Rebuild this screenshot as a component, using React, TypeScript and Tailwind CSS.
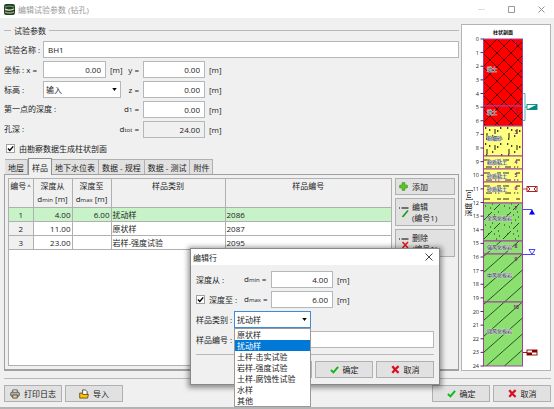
import React, {useState} from "react";

const samples = [
    {id: 1, from: '4.00', to: '6.00', type: '扰动样', no: '2086'},
    {id: 2, from: '11.00', to: '', type: '原状样', no: '2087'},
    {id: 3, from: '23.00', to: '', type: '岩样-强度试验', no: '2095'},
];

const tabs = ['地层', '样品', '地下水位表', '数据 - 规程', '数据 - 测试', '附件'];

const sampleTypes = ['原状样', '扰动样', '土样-击实试验', '岩样-强度试验', '土样-腐蚀性试验', '水样', '其他'];

// y coordinates are in the drawing's own space, 0 m is at y=14, 24 m at y=341
const layers = [
    {n: '1', top: 14, bottom: 81, fill: 'red', name: '填土', ly: 44, ny: 20},
    {n: '2', top: 81, bottom: 101, fill: 'red', name: '填土', ly: 87, ny: 87},
    {n: '3', top: 101, bottom: 131, fill: 'sand', name: '粉细砂', ly: 113, ny: 108},
    {n: '4', top: 131, bottom: 144, fill: 'clay', name: '粉质粘土', ly: 137, ny: 138},
    {n: '5', top: 144, bottom: 157, fill: 'clay', name: '砂质粘土', ly: 151, ny: 151},
    {n: '6', top: 157, bottom: 178, fill: 'clay', name: '砂质粘土', ly: 164, ny: 164},
    {n: '7', top: 178, bottom: 216, fill: 'dots', name: '全风化板岩', ly: 193, ny: 184},
    {n: '8', top: 216, bottom: 229, fill: 'rock', name: '强风化板岩', ly: 222, ny: 222},
    {n: '9', top: 229, bottom: 277, fill: 'rock', name: '中风化板岩', ly: 250, ny: 235},
    {n: '10', top: 277, bottom: 341, fill: 'rock', name: '微风化板岩', ly: 306, ny: 283},
];

const depths = Array.from({length: 25}, (_, i) => i);

const inputClass = "h-[17px] border border-[#b4b8b8] bg-white px-1 outline-none";
const buttonClass = "flex h-[17px] w-[58px] items-center justify-center gap-1 border border-[#b0b0b0] bg-[#e1e1e1]";

function CheckIcon() {
    return (
        <svg viewBox="0 0 10 10" className="h-[9px] w-[9px]">
            <path d="M1 5.500 3.800 8.200 9 2" fill="none" stroke="#12b812" strokeWidth="2.100"/>
        </svg>
    );
}

function CrossIcon() {
    return (
        <svg viewBox="0 0 10 10" className="h-[9px] w-[9px]">
            <path d="M1.500 1.300Q4 5.500 8.500 8.700M8.500 1.300Q4.500 4.500 1.500 8.700" fill="none" stroke="#d80f20"
                  strokeWidth="2.500"/>
        </svg>
    );
}

function Arrow() {
    return (
        <svg viewBox="0 0 6 4" className="pointer-events-none absolute right-1 top-[7px] h-[3px] w-[5px]">
            <path d="M0 0H6L3 4Z" fill="#000"/>
        </svg>
    );
}

function CheckBox({id}: {id: string}) {
    return (
        <span className="relative flex h-[9px] w-[9px]">
            <input id={id} type="checkbox" defaultChecked
                   className="peer h-[9px] w-[9px] appearance-none border border-[#a0a0a0] bg-white"/>
            <svg viewBox="0 0 9 9" className="pointer-events-none absolute inset-0 hidden peer-checked:block">
                <path d="M2 4.600 3.800 6.400 7.200 2.400" fill="none" stroke="#000" strokeWidth="1.400"/>
            </svg>
        </span>
    );
}

function Sub({children}: {children: string}) {
    return <span className="text-[6px]">{children}</span>;
}

function Profile() {
    return (
        <svg viewBox="0 0 88 345" className="h-[345px] w-[88px]" fontFamily="'Open Sans','Noto Sans CJK SC',sans-serif">
            <defs>
                <pattern id="red" x="21" y="14" width="14" height="14" patternUnits="userSpaceOnUse">
                    <rect width="14" height="14" fill="#ff0000"/>
                    <path d="M-1 -1 15 15M15 -1 -1 15" stroke="#400" strokeWidth="0.800"/>
                </pattern>
                <pattern id="sand" x="21" y="101" width="22" height="16" patternUnits="userSpaceOnUse">
                    <rect width="22" height="16" fill="#ffff80"/>
                    <path d="M2 2h1.300M6 4h1.300M17 2h1.400M9 10h1.300M14 5h1.400M3 13h1.300M18 13h1.300" stroke="#000"
                          strokeWidth="1.300"/>
                    <path d="M12 3v5M4 7v5" stroke="#000" strokeWidth="0.900"/>
                </pattern>
                <pattern id="clay" x="21" y="131" width="19" height="13" patternUnits="userSpaceOnUse">
                    <rect width="19" height="13" fill="#ffff80"/>
                    <path d="M1 4h6M14 4h4M3 11h6M12 11h1.300M15 11h1.300" stroke="#111" strokeWidth="0.900"/>
                </pattern>
                <pattern id="rock" x="21" y="216" width="18" height="16" patternUnits="userSpaceOnUse">
                    <rect width="18" height="16" fill="#8be070"/>
                    <path d="M-9 24 27 -8M-9 8 9 -8M9 24 27 8" stroke="#122a12" strokeWidth="0.800"/>
                </pattern>
                <pattern id="dots" x="21" y="178" width="19" height="19" patternUnits="userSpaceOnUse">
                    <rect width="19" height="19" fill="#8be070"/>
                    <path d="M1 17 9 9M11 7 17 1" stroke="#122a12" strokeWidth="0.800"/>
                    <path d="M2 3h1M7 5h1M11 12h1M15 9h1M13 17h1M5 12h1M9 1h1M16 14h1" stroke="#122a12"/>
                </pattern>
            </defs>
            <text x="41" y="9" fontSize="5" fontWeight="700" textAnchor="middle">柱状剖面</text>
            {layers.map((l) => (
                <g key={l.n}>
                    <rect x="21.500" y={l.top} width="39" height={l.bottom - l.top} fill={`url(#${l.fill})`}
                          stroke="#a040a0" strokeWidth="1"/>
                    <text x="25" y={l.ly + 2} fontSize="5" fill="#234" stroke="#ddd" strokeWidth="0.700"
                          paintOrder="stroke">{l.name}</text>
                    <text x="54" y={l.ny + 1} fontSize="5" fontWeight="700" fill="#8a2080"
                          textAnchor="middle">{l.n}</text>
                </g>
            ))}
            {depths.map((d) => (
                <g key={d}>
                    <path d={`M18.500 ${14 + d * 13.625}h3`} stroke="#222" strokeWidth="0.900"/>
                    <text x="17" y={16 + d * 13.625} fontSize="5.500" textAnchor="end" fill="#222">{d}</text>
                </g>
            ))}
            <text x="9" y="178" fontSize="7" textAnchor="middle" transform="rotate(-90 9 178)">深度 [m]</text>
            <path d="M61 68.500h2v27H61M63 82h2" fill="none" stroke="#4aa" strokeWidth="0.900"/>
            <rect x="65" y="79.500" width="10" height="5" fill="#fff" stroke="#088" strokeWidth="0.900"/>
            <path d="M65 84.500 75 79.500V84.500Z" fill="#088"/>
            <path d="M61 164h4" stroke="#a33" strokeWidth="0.900"/>
            <rect x="65" y="161.500" width="10" height="5" fill="#fff" stroke="#a22" strokeWidth="1"/>
            <path d="M66 162 68 164 66 166M74 162 72 164 74 166" fill="none" stroke="#a22"/>
            <path d="M61 184.500h9v5M61 229.500h12" fill="none" stroke="#33f" strokeWidth="0.900"/>
            <path d="M67 189.500 70 184.500 73 189.500Z" fill="#00f"/>
            <path d="M67 224.500h6l-3 5Z" fill="#fff" stroke="#33f" strokeWidth="0.900"/>
            <path d="M61 327.500h4" stroke="#800" strokeWidth="0.900"/>
            <rect x="65" y="325" width="10" height="5" fill="#fff" stroke="#800" strokeWidth="0.900"/>
            <path d="M70 325h5v2.500h-5ZM65 327.500h5v2.500h-5Z" fill="#800"/>
        </svg>
    );
}

function EditDialog() {
    const [type, setType] = useState('扰动样');

    return (
        <div role="dialog" aria-label="编辑行"
             className="absolute left-[190px] top-[248px] w-[250px] border border-[#888] bg-[#f0f0f0] shadow-[0_1px_5px_2px_rgba(0,0,0,0.4)]">
            <header className="flex h-4 items-center justify-between bg-white pl-[2px] pr-1.5">
                <h2>编辑行</h2>
                <button aria-label="关闭">
                    <svg viewBox="0 0 8 8" className="h-2 w-2">
                        <path d="M0.500 0.500 7.500 7.500M7.500 0.500 0.500 7.500" stroke="#333" strokeWidth="0.900"/>
                    </svg>
                </button>
            </header>
            <div className="flex flex-col gap-[3px] px-[5px] pb-1.5 pt-1.5">
                <div className="flex items-center">
                    <span className="w-12">深度从 :</span>
                    <label htmlFor="dmin" className="w-[27px]">d<Sub>min</Sub> =</label>
                    <input id="dmin" defaultValue="4.00" className={`${inputClass} w-[62px] text-right`}/>
                    <span className="pl-1">[m]</span>
                </div>
                <div className="flex items-center">
                    <span className="flex w-12 items-center gap-1">
                        <CheckBox id="useTo"/>
                        <label htmlFor="useTo" className="whitespace-nowrap">深度至 :</label>
                    </span>
                    <label htmlFor="dmax" className="w-[27px]">d<Sub>max</Sub> =</label>
                    <input id="dmax" defaultValue="6.00" className={`${inputClass} w-[62px] text-right`}/>
                    <span className="pl-1">[m]</span>
                </div>
                <div className="flex items-center">
                    <label htmlFor="type" className="w-[38px]">样品类别 :</label>
                    <div className="relative">
                        <select id="type" value={type} onChange={(e) => setType(e.target.value)}
                                className="block h-[17px] w-[77px] appearance-none border border-[#3c8dd9] bg-white px-[2px] outline-none">
                            {sampleTypes.map((s) => <option key={s}>{s}</option>)}
                        </select>
                        <Arrow/>
                        <ul role="listbox" aria-label="样品类别"
                            className="absolute left-0 top-[17px] z-10 w-[77px] border border-[#999] bg-white">
                            {sampleTypes.map((s) => (
                                <li key={s} role="option" aria-selected={s === type} onClick={() => setType(s)}
                                    className={`h-[11px] px-[2px] leading-[11px] ${s === type ? "bg-[#0078d7] text-white" : ""}`}>
                                    {s}
                                </li>
                            ))}
                        </ul>
                    </div>
                </div>
                <div className="flex items-center">
                    <label htmlFor="no" className="w-[38px]">样品编号 :</label>
                    <input id="no" defaultValue="2086" className={`${inputClass} min-w-0 flex-1`}/>
                </div>
                <div className="mt-[3px] flex justify-end gap-[3px] border-t border-[#b8b8b8] pt-1.5">
                    <button className={buttonClass} aria-label="上一个"/>
                    <button className={buttonClass}><CheckIcon/>确定</button>
                    <button className={buttonClass}><CrossIcon/>取消</button>
                </div>
            </div>
        </div>
    );
}

export default function App() {
    const [tab, setTab] = useState('样品');

    return (
        <div
            className="relative flex min-h-screen flex-col border-b-2 border-[#b4b4b4] bg-[#f0f0f0] font-['Open_Sans','Noto_Sans_CJK_SC',sans-serif] text-[8px] leading-[11px] text-[#222]">
            <header className="flex h-[18px] items-center bg-white pl-1 pr-[9px] text-[#999]">
                <svg viewBox="0 0 12 12" className="mr-[3px] h-[11px] w-[11px]">
                    <rect width="12" height="12" rx="2.500" fill="#253a25"/>
                    <path d="M1 2.500Q6 .5 11 2.500V4Q6 2 1 4Z" fill="#5c9a54"/>
                    <path d="M1 5Q6 7 11 4.500V6Q6 8.500 1 6.500Z" fill="#e0e4c8"/>
                    <path d="M1 8Q6 10 11 8V9.500Q6 11.500 1 9.500Z" fill="#8da878"/>
                </svg>
                <h1 className="flex-1">编辑试验参数 (钻孔)</h1>
                <div className="flex items-center gap-[23px]">
                    <button aria-label="最小化">
                        <svg viewBox="0 0 7 7" className="h-[7px] w-[7px]"><path d="M0 3.500h7" stroke="#ddd"/></svg>
                    </button>
                    <button aria-label="最大化">
                        <svg viewBox="0 0 7 7" className="h-[7px] w-[7px]">
                            <path d="M.5 .5h6v6h-6Z" fill="none" stroke="#999"/>
                        </svg>
                    </button>
                    <button aria-label="关闭">
                        <svg viewBox="0 0 7 7" className="h-[7px] w-[7px]">
                            <path d="M.5 .5 6.500 6.500M6.500 .5 .5 6.500" stroke="#888" strokeWidth="0.900"/>
                        </svg>
                    </button>
                </div>
            </header>

            <main className="flex flex-1 gap-[2px] pl-1 pr-[3px] pt-1.5">
                <div className="flex min-w-0 flex-1 flex-col">
                    <div className="mb-[5px] flex h-3 items-center gap-[3px]">
                        <span className="w-[7px] border-t border-[#b8b8b8]"/>
                        <h2>试验参数</h2>
                        <span className="flex-1 border-t border-[#b8b8b8]"/>
                    </div>
                    <div className="flex flex-col gap-[3px]">
                        <div className="flex items-center">
                            <label htmlFor="name" className="w-[39px]">试验名称 :</label>
                            <input id="name" defaultValue="BH1" className={`${inputClass} min-w-0 flex-1`}/>
                        </div>
                        <div className="flex items-center">
                            <label htmlFor="x" className="w-[39px]">坐标 : x =</label>
                            <input id="x" defaultValue="0.00" className={`${inputClass} w-[63px] text-right`}/>
                            <span className="w-5 pl-1">[m]</span>
                            <label htmlFor="y" className="w-[17px] pr-1 text-right">y =</label>
                            <input id="y" defaultValue="0.00" className={`${inputClass} w-[62px] text-right`}/>
                            <span className="pl-1">[m]</span>
                        </div>
                        <div className="flex items-center">
                            <label htmlFor="elevation" className="w-[39px]">标高 :</label>
                            <div className="relative">
                                <select id="elevation"
                                        className="block h-[17px] w-[78px] appearance-none border border-[#b4b8b8] bg-white px-[2px] outline-none">
                                    <option>输入</option>
                                </select>
                                <Arrow/>
                            </div>
                            <label htmlFor="z" className="w-[22px] pr-1 text-right">z =</label>
                            <input id="z" defaultValue="0.00" className={`${inputClass} w-[62px] text-right`}/>
                            <span className="pl-1">[m]</span>
                        </div>
                        <div className="flex items-center">
                            <label htmlFor="d1" className="flex w-[139px] justify-between pr-1">
                                <span>第一点的深度 :</span>
                                <span>d<Sub>1</Sub> =</span>
                            </label>
                            <input id="d1" defaultValue="0.00" className={`${inputClass} w-[62px] text-right`}/>
                            <span className="pl-1">[m]</span>
                        </div>
                        <div className="flex items-center">
                            <label htmlFor="dtot" className="flex w-[139px] justify-between pr-1">
                                <span>孔深 :</span>
                                <span>d<Sub>tot</Sub> =</span>
                            </label>
                            <input id="dtot" readOnly value="24.00"
                                   className="h-[17px] w-[62px] border border-[#b4b8b8] bg-[#f0f0f0] px-1 text-right outline-none"/>
                            <span className="pl-1">[m]</span>
                        </div>
                    </div>
                    <div className="mt-1 flex h-3 items-center gap-1 pl-[2px]">
                        <CheckBox id="generate"/>
                        <label htmlFor="generate">由勘察数据生成柱状剖面</label>
                    </div>

                    <div role="tablist" className="mt-1 flex h-4 items-end pl-[1px]">
                        {tabs.map((t) => (
                            <button key={t} role="tab" aria-selected={t === tab} onClick={() => setTab(t)}
                                    className={t === tab
                                        ? "relative z-10 -mb-px h-[17px] border border-b-0 border-[#909090] bg-[#f0f0f0] px-[3px]"
                                        : "h-[15px] border border-b-0 border-l-0 border-[#b0b0b0] bg-[#e1e1e1] px-[3px]"}>
                                {t}
                            </button>
                        ))}
                    </div>
                    <div className="flex flex-1 gap-[3px] border border-b-2 border-[#a0a0a0] p-[3px]">
                        <div className="min-w-0 flex-1 border border-[#b0b0b0] bg-white">
                            <table className="w-full table-fixed border-collapse">
                                <thead className="bg-[#f0f0f0]">
                                <tr className="h-[27px] align-top leading-[13px]">
                                    <th className="w-6 border-b border-r border-[#b0b0b0] font-normal">
                                        <span className="flex items-center justify-center gap-[1px]">
                                            编号
                                            <svg viewBox="0 0 5 3" className="h-[3px] w-1">
                                                <path d="M0 3 2.500 0 5 3Z" fill="#888"/>
                                            </svg>
                                        </span>
                                    </th>
                                    <th className="w-[39px] border-b border-r border-[#b0b0b0] font-normal">
                                        深度从<br/>d<Sub>min</Sub> [m]
                                    </th>
                                    <th className="w-[39px] border-b border-r border-[#b0b0b0] font-normal">
                                        深度至<br/>d<Sub>max</Sub> [m]
                                    </th>
                                    <th className="w-[114px] border-b border-r border-[#b0b0b0] font-normal">样品类别</th>
                                    <th className="border-b border-[#b0b0b0] font-normal">样品编号</th>
                                </tr>
                                </thead>
                                <tbody>
                                {samples.map((s) => (
                                    <tr key={s.id} className={`h-[14px] ${s.id === 1 ? "bg-[#c8f3c8]" : ""}`}>
                                        <td className={`border-b border-r border-[#b0b0b0] text-center ${s.id === 1 ? "" : "bg-[#f0f0f0]"}`}>{s.id}</td>
                                        <td className="border-b border-r border-[#b0b0b0] pr-[1px] text-right">{s.from}</td>
                                        <td className="border-b border-r border-[#b0b0b0] pr-[1px] text-right">{s.to}</td>
                                        <td className="border-b border-r border-[#b0b0b0] pl-[1px]">{s.type}</td>
                                        <td className="border-b border-[#b0b0b0] pl-[1px]">{s.no}</td>
                                    </tr>
                                ))}
                                </tbody>
                            </table>
                        </div>
                        <div className="flex w-[60px] flex-col gap-[3px]">
                            <button className="flex h-[17px] items-center gap-1 border border-[#b0b0b0] bg-[#e1e1e1] px-[3px]">
                                <svg viewBox="0 0 9 9" className="h-[9px] w-[9px]">
                                    <path d="M3.200 .7h2.600v2.500h2.500v2.600H5.800v2.500H3.200V5.800H.7V3.200h2.500Z" fill="#5ccc1a"
                                          stroke="#289018" strokeWidth="0.700"/>
                                </svg>
                                添加
                            </button>
                            <button
                                className="flex h-7 items-center gap-[3px] border border-[#b0b0b0] bg-[#e1e1e1] px-[3px] text-left">
                                <svg viewBox="0 0 10 12" className="h-3 w-2.5">
                                    <path d="M0 2h1M2.500 2h7" stroke="#000" strokeWidth="1.200"/>
                                    <path d="M3.500 11 9 4.500" stroke="#17a017" strokeWidth="1.700"/>
                                </svg>
                                <span>编辑<br/>(编号1)</span>
                            </button>
                            <button
                                className="flex h-7 items-center gap-[3px] border border-[#b0b0b0] bg-[#e1e1e1] px-[3px] text-left">
                                <svg viewBox="0 0 10 12" className="h-3 w-2.5">
                                    <path d="M0 2h1M2.500 2h7" stroke="#000" strokeWidth="1.200"/>
                                    <path d="M3.500 5 9 11M9 5 3.500 11" stroke="#e81818" strokeWidth="1.600"/>
                                </svg>
                                <span>删除<br/>(编号1)</span>
                            </button>
                        </div>
                    </div>
                </div>
                <aside className="w-[90px] border border-[#b4b4b4] bg-white">
                    <Profile/>
                </aside>
            </main>

            <footer className="pb-[5px] pl-1 pr-[3px] pt-[7px]">
                <div className="flex gap-[3px] border-t border-[#b8b8b8] pt-1.5">
                    <button className={buttonClass}>
                        <svg viewBox="0 0 11 11" className="h-2.5 w-2.5">
                            <path d="M3 3.500V1h5v2.500" fill="#fff" stroke="#444" strokeWidth="0.900"/>
                            <rect x="0.800" y="3.500" width="9.400" height="4.500" rx="1.200" fill="#b9b3a0" stroke="#444"
                                  strokeWidth="0.900"/>
                            <path d="M3 6.500h5V10H3Z" fill="#f2c98c" stroke="#444" strokeWidth="0.900"/>
                        </svg>
                        打印日志
                    </button>
                    <button className={buttonClass}>
                        <svg viewBox="0 0 11 11" className="h-2.5 w-2.5">
                            <path d="M4 6V1h3l2 2v4" fill="#fff" stroke="#333" strokeWidth="0.900"/>
                            <path d="M.8 10V4.500h2.500l1 1.500h6L9.500 10Z" fill="#fcbf12" stroke="#5a4300"
                                  strokeWidth="0.900"/>
                        </svg>
                        导入
                    </button>
                    <span className="flex-1"/>
                    <button className={buttonClass}><CheckIcon/>确定</button>
                    <button className={buttonClass}><CrossIcon/>取消</button>
                </div>
            </footer>

            <EditDialog/>
        </div>
    );
}
